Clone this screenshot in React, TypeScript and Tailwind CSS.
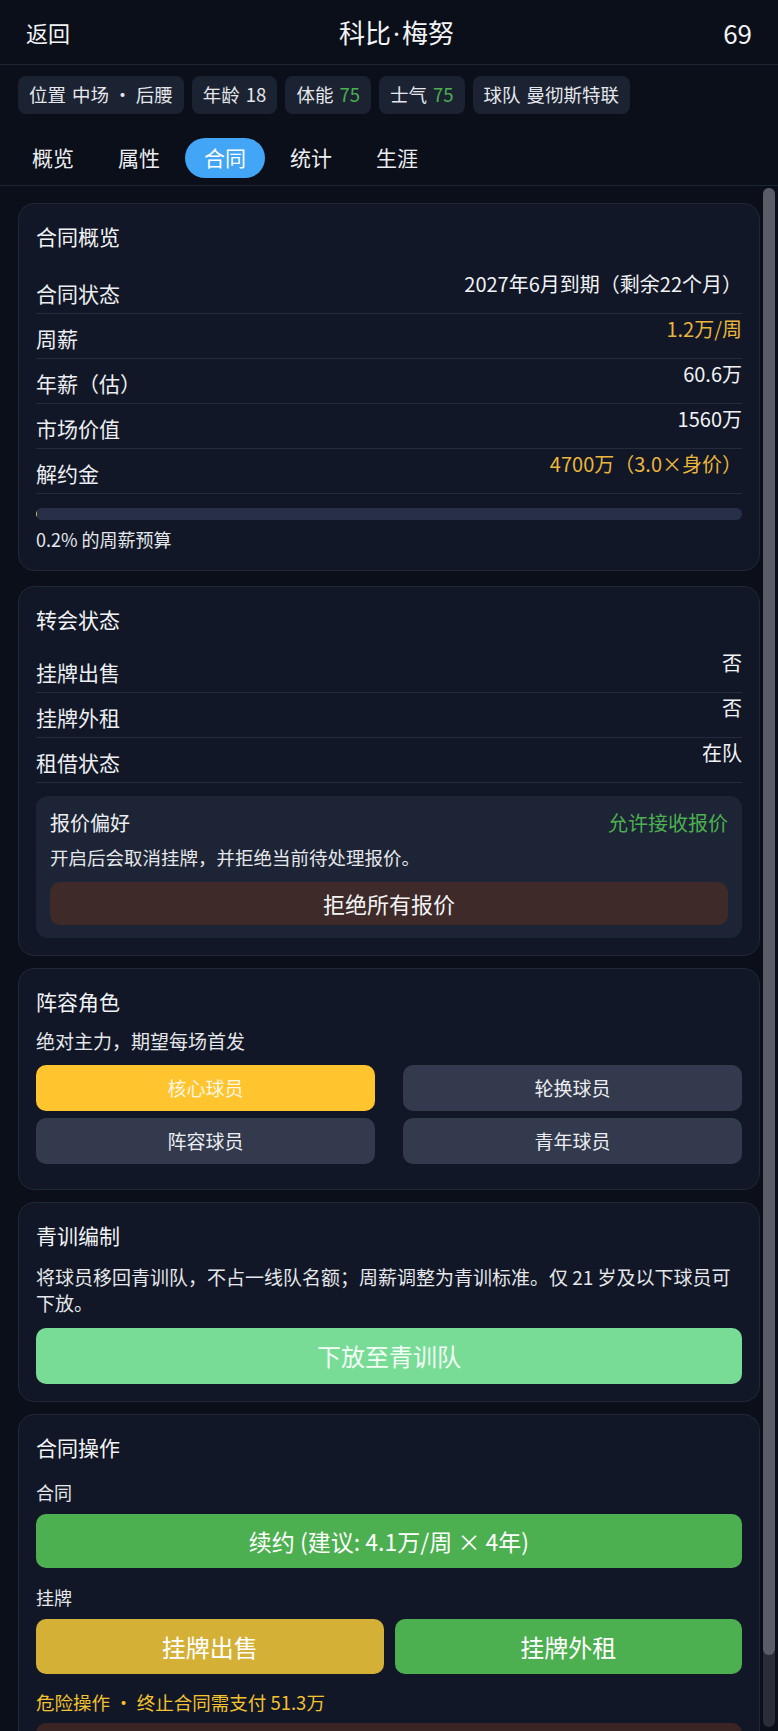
import React from "react";

const font = { fontFamily: '"Noto Sans CJK SC", "Noto Sans", sans-serif' };

const chips = [
  { label: "位置", value: "中场 · 后腰", green: false },
  { label: "年龄", value: "18", green: false },
  { label: "体能", value: "75", green: true },
  { label: "士气", value: "75", green: true },
  { label: "球队", value: "曼彻斯特联", green: false },
];

const tabs = ["概览", "属性", "合同", "统计", "生涯"];

function Card({ children, className = "" }: { children: React.ReactNode; className?: string }) {
  return (
    <div className={`rounded-[16px] border border-[#1f2739] bg-[#111726] px-[17px] pt-[17px] pb-[17px] ${className}`}>
      {children}
    </div>
  );
}

function CardTitle({ children }: { children: React.ReactNode }) {
  return <div className="text-[21px] leading-[30px] text-[#f1f3f6]">{children}</div>;
}

function Row({ label, value, valueClass = "text-[#f1f3f6]" }: { label: string; value: string; valueClass?: string }) {
  return (
    <div className="flex items-start justify-between border-b border-[#232b3c] pt-[6px] pb-[2px]">
      <span className="text-[21px] leading-[36px] text-[#eceef2]">{label}</span>
      <span className={`text-[20px] leading-[18px] ${valueClass}`}>{value}</span>
    </div>
  );
}

export default function App() {
  return (
    <div style={font} className="relative h-[1731px] w-full overflow-hidden bg-[#0b0f19] text-white">
      {/* header */}
      <div className="flex h-[65px] items-center border-b border-[#1d2433] px-[26px]">
        <span className="text-[22px] text-[#f3f4f6]">返回</span>
        <span className="flex-1 text-center text-[26px] text-[#f3f4f6]">
          科比<span className="font-['Noto_Sans'] px-[2px]">·</span>梅努
        </span>
        <span className="text-[26px] text-[#f3f4f6]">69</span>
      </div>

      {/* chips */}
      <div className="flex gap-2 px-[18px] pt-[11px]">
        {chips.map((c) => (
          <div key={c.label} className="flex h-[38px] items-center rounded-[8px] bg-[#1b2232] px-[11px] text-[18.5px] text-[#e5e7eb]">
            <span>{c.label}</span>
            <span className={`ml-[6px] ${c.green ? "text-[#4caf50]" : ""}`}>{c.value}</span>
          </div>
        ))}
      </div>

      {/* tabs */}
      <div className="flex gap-[6px] border-b border-[#1d2433] px-[13px] pt-[24px] pb-[7px]">
        {tabs.map((t) => (
          <div
            key={t}
            className={`flex h-[40px] w-[80px] items-center justify-center rounded-full text-[21px] ${
              t === "合同" ? "bg-[#42a5f5] text-white" : "text-[#eceef2]"
            }`}
          >
            {t}
          </div>
        ))}
      </div>

      {/* content */}
      <div className="flex flex-col px-[18px] pt-[17px]">
        <Card className="mb-[15px] pb-[19px]">
          <CardTitle>合同概览</CardTitle>
          <div className="mt-[18px]">
            <Row label="合同状态" value="2027年6月到期（剩余22个月）" />
            <Row label="周薪" value="1.2万/周" valueClass="text-[#eab53c]" />
            <Row label="年薪（估）" value="60.6万" />
            <Row label="市场价值" value="1560万" />
            <Row label="解约金" value="4700万（3.0×身价）" valueClass="text-[#eab53c]" />
          </div>
          <div className="mt-[14px] h-[12px] overflow-hidden rounded-full bg-[#283049]">
            <div className="h-full bg-[#e0b84a]" style={{ width: "0.2%" }} />
          </div>
          <div className="mt-[7px] text-[18px] leading-[24px] text-[#e5e7eb]">0.2% 的周薪预算</div>
        </Card>

        <Card className="mb-3">
          <CardTitle>转会状态</CardTitle>
          <div className="mt-[14px]">
            <Row label="挂牌出售" value="否" />
            <Row label="挂牌外租" value="否" />
            <Row label="租借状态" value="在队" />
          </div>
          <div className="mt-[13px] rounded-[12px] bg-[#1d2435] px-[14px] pt-[14px] pb-[13px]">
            <div className="flex items-center justify-between">
              <span className="text-[20px] leading-[26px] text-[#eceef2]">报价偏好</span>
              <span className="text-[20px] leading-[26px] text-[#4caf50]">允许接收报价</span>
            </div>
            <div className="mt-2 text-[18.5px] leading-[26px] text-[#e5e7eb]">开启后会取消挂牌，并拒绝当前待处理报价。</div>
            <div className="mt-3 flex h-[43px] items-center justify-center rounded-[10px] bg-[#3d2a29] text-[22px] text-[#f3f4f6]">
              拒绝所有报价
            </div>
          </div>
        </Card>

        <Card className="mb-3">
          <CardTitle>阵容角色</CardTitle>
          <div className="mt-3 text-[19px] leading-[26px] text-[#e5e7eb]">绝对主力，期望每场首发</div>
          <div className="mt-[11px] mb-[8px] grid grid-cols-2 gap-x-[28px] gap-y-[7px]">
            <div className="flex h-[46px] items-center justify-center rounded-[10px] bg-[#ffc42e] text-[19px] text-[#fdf6e3]">核心球员</div>
            <div className="flex h-[46px] items-center justify-center rounded-[10px] bg-[#333a4d] text-[19px] text-[#eceef2]">轮换球员</div>
            <div className="flex h-[46px] items-center justify-center rounded-[10px] bg-[#333a4d] text-[19px] text-[#eceef2]">阵容球员</div>
            <div className="flex h-[46px] items-center justify-center rounded-[10px] bg-[#333a4d] text-[19px] text-[#eceef2]">青年球员</div>
          </div>
        </Card>

        <Card className="mb-3">
          <CardTitle>青训编制</CardTitle>
          <div className="mt-[14px] text-[19px] leading-[26px] text-[#e5e7eb]">
            将球员移回青训队，不占一线队名额；周薪调整为青训标准。仅 21 岁及以下球员可下放。
          </div>
          <div className="mt-3 flex h-[56px] items-center justify-center rounded-[10px] bg-[#78dc96] text-[24px] text-[#f4fff7]">
            下放至青训队
          </div>
        </Card>

        <Card>
          <CardTitle>合同操作</CardTitle>
          <div className="mt-[17px] text-[18px] leading-[26px] text-[#e5e7eb]">合同</div>
          <div className="mt-[9px] flex h-[54px] items-center justify-center rounded-[10px] bg-[#4caf50] text-[23px] text-white">
            续约 (建议: 4.1万/周 × 4年)
          </div>
          <div className="mt-4 text-[18px] leading-[26px] text-[#e5e7eb]">挂牌</div>
          <div className="mt-[9px] grid grid-cols-2 gap-[11px]">
            <div className="flex h-[55px] items-center justify-center rounded-[10px] bg-[#d4b037] text-[24px] text-white">挂牌出售</div>
            <div className="flex h-[55px] items-center justify-center rounded-[10px] bg-[#4caf50] text-[24px] text-white">挂牌外租</div>
          </div>
          <div className="mt-[15px] text-[18.5px] leading-[26px] text-[#f2c230]">危险操作 · 终止合同需支付 51.3万</div>
          <div className="mt-2 h-[54px] rounded-[10px] bg-[#3b2424]" />
        </Card>
      </div>

      {/* overlay scrollbar */}
      <div className="absolute right-[3px] top-[188px] h-[1539px] w-[12px] rounded-full bg-[#2a2d35]">
        <div className="h-[1467px] w-full rounded-full bg-[#5a5d66]" />
      </div>
    </div>
  );
}
